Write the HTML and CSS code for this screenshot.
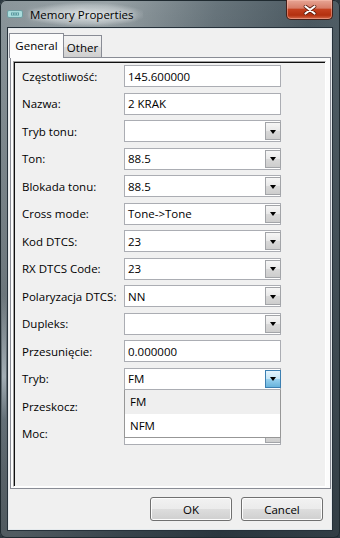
FILE: index.html
```html
<!DOCTYPE html>
<html lang="pl">
<head>
    <meta charset="UTF-8">
    <meta name="viewport" content="width=device-width, initial-scale=1.0">
    <title>Memory Properties</title>
    <link rel="stylesheet" href="styles.css">
</head>
<body>
    <div class="window">
        <!-- title bar -->
        <div class="titlebar">
            <svg class="app-icon" xmlns="http://www.w3.org/2000/svg" viewBox="0 0 16 8" width="16" height="8">
                <rect x="0.5" y="0.5" width="15" height="7" rx="1.5" fill="#a9dcdc" stroke="#6f9ea2"/>
                <rect x="4" y="2.5" width="8" height="3" fill="#5d9ca2"/>
                <rect x="5" y="3.5" width="1" height="1" fill="#d8f2f2"/>
                <rect x="7.5" y="3.5" width="1" height="1" fill="#d8f2f2"/>
                <rect x="10" y="3.5" width="1" height="1" fill="#d8f2f2"/>
            </svg>
            <span class="title">Memory Properties</span>
            <div class="close-btn">
                <svg xmlns="http://www.w3.org/2000/svg" viewBox="0 0 14 10" width="14" height="10">
                    <path d="M2.5 1.5L11.5 8.5M11.5 1.5L2.5 8.5" stroke="#5a1a0c" stroke-width="3.6" stroke-linecap="round"/>
                    <path d="M2.5 1.5L11.5 8.5M11.5 1.5L2.5 8.5" stroke="#ffffff" stroke-width="2.2" stroke-linecap="round"/>
                </svg>
            </div>
        </div>

        <!-- client area -->
        <div class="client">
            <div class="tabs">
                <div class="tab active">General</div>
                <div class="tab">Other</div>
            </div>

            <div class="tab-panel">
                <div class="form-frame">
                    <div class="form-grid">
                        <label>Częstotliwość:</label>
                        <div class="field"><span class="value">145.600000</span></div>

                        <label>Nazwa:</label>
                        <div class="field"><span class="value">2 KRAK</span></div>

                        <label>Tryb tonu:</label>
                        <div class="field combo"><span class="value"></span><span class="combo-btn"></span></div>

                        <label>Ton:</label>
                        <div class="field combo"><span class="value">88.5</span><span class="combo-btn"></span></div>

                        <label>Blokada tonu:</label>
                        <div class="field combo"><span class="value">88.5</span><span class="combo-btn"></span></div>

                        <label>Cross mode:</label>
                        <div class="field combo"><span class="value">Tone-&gt;Tone</span><span class="combo-btn"></span></div>

                        <label>Kod DTCS:</label>
                        <div class="field combo"><span class="value">23</span><span class="combo-btn"></span></div>

                        <label>RX DTCS Code:</label>
                        <div class="field combo"><span class="value">23</span><span class="combo-btn"></span></div>

                        <label>Polaryzacja DTCS:</label>
                        <div class="field combo"><span class="value">NN</span><span class="combo-btn"></span></div>

                        <label>Dupleks:</label>
                        <div class="field combo"><span class="value"></span><span class="combo-btn"></span></div>

                        <label>Przesunięcie:</label>
                        <div class="field"><span class="value">0.000000</span></div>

                        <label>Tryb:</label>
                        <div class="field combo open">
                            <span class="value">FM</span><span class="combo-btn"></span>
                            <!-- opened list -->
                            <div class="dropdown-list">
                                <div class="dropdown-item hover">FM</div>
                                <div class="dropdown-item">NFM</div>
                            </div>
                        </div>

                        <label>Przeskocz:</label>
                        <div class="field combo"><span class="value"></span><span class="combo-btn"></span></div>

                        <label>Moc:</label>
                        <div class="field combo"><span class="value"></span><span class="combo-btn"></span></div>
                    </div>
                </div>
            </div>

            <div class="actions">
                <button class="button">OK</button>
                <button class="button">Cancel</button>
            </div>
        </div>
    </div>
</body>
</html>
```

FILE: styles.css
```css
/* reset */
* {
    margin: 0;
    padding: 0;
    box-sizing: border-box;
}

body {
    background: #2c3840;
    font-family: "Open Sans", "Noto Sans", sans-serif;
    font-size: 11.5px;
    color: #000;
}

/* window frame */
.window {
    width: 340px;
    height: 538px;
    border-radius: 6px;
    overflow: hidden;
    display: flex;
    flex-direction: column;
    box-shadow: inset 0 0 0 1px #1f2a30;
    background:
        linear-gradient(to bottom, transparent 55%, rgba(214, 226, 234, 0.55) 70%, rgba(120, 140, 155, 0.2) 78%, transparent 88%) 2px 0 / 4px 100% no-repeat,
        linear-gradient(to bottom, rgba(0, 0, 0, 0) 0%, rgba(8, 18, 26, 0.5) 100%),
        linear-gradient(100deg, #8a959a 0%, #99a3a7 25%, #68757c 50%, #4c5a62 72%, #5d6a71 100%);
}

.titlebar {
    height: 28px;
    display: flex;
    align-items: center;
    padding-left: 7px;
}

.app-icon {
    margin-right: 7px;
}

.title {
    font-size: 11.5px;
    padding: 4px 10px 4px 2px;
    margin-left: -2px;
    background: radial-gradient(ellipse at center, rgba(235, 240, 242, 0.75) 0%, rgba(235, 240, 242, 0.3) 55%, transparent 75%);
    text-shadow: 0 0 6px rgba(255, 255, 255, 0.9);
}

.close-btn {
    margin-left: auto;
    margin-right: 7px;
    align-self: flex-start;
    width: 47px;
    height: 20px;
    border: 1px solid #44201a;
    border-top: none;
    border-radius: 0 0 5px 5px;
    background: linear-gradient(to bottom, #e7a595 0%, #d77d68 42%, #c4401f 50%, #b3300f 80%, #d5694a 100%);
    box-shadow: inset 0 0 0 1px rgba(255, 200, 185, 0.45);
    display: flex;
    align-items: center;
    justify-content: center;
}

/* client area */
.client {
    margin: 0 8px 8px;
    height: 502px;
    background: #f0f0f0;
    border: 1px solid #e4e9ec;
    box-shadow: 0 0 0 1px #26313a;
    padding-top: 4px;
}

/* tabs */
.tabs {
    height: 24px;
    display: flex;
    align-items: flex-end;
    position: relative;
    z-index: 1;
}

.tab {
    height: 22px;
    width: 38px;
    border: 1px solid #898c95;
    border-bottom: none;
    border-left: none;
    background: linear-gradient(to bottom, #f2f2f2 0%, #ebebeb 50%, #dddddd 51%, #cfcfcf 100%);
    display: flex;
    align-items: center;
    justify-content: center;
    padding-top: 1px;
}

.tab.active {
    height: 25px;
    width: 55px;
    margin-bottom: -1px;
    border-left: 1px solid #898c95;
    background: #fcfcfc;
    padding-top: 0;
    padding-bottom: 2px;
}

.tab-panel {
    margin-left: 1px;
    height: 432px;
    border: 1px solid #898c95;
    background: #fcfcfc;
    padding: 3px 4px 1px 2px;
}

/* sunken frame round the form */
.form-frame {
    height: 100%;
    background: #f0f0f0;
    border: 1px solid;
    border-color: #a0a0a0 #ffffff #ffffff #a0a0a0;
    box-shadow: inset 1px 1px 0 #101010;
    padding: 3px 0 0 8px;
}

.form-grid {
    display: grid;
    grid-template-columns: 102px 157px;
    grid-auto-rows: 22px;
    row-gap: 5.5px;
}

.form-grid label {
    display: flex;
    align-items: center;
    white-space: nowrap;
}

/* entries and combos */
.field {
    position: relative;
    display: flex;
    align-items: center;
    background: #fff;
    border: 1px solid #abadb3;
}

.field .value {
    flex: 1;
    padding-left: 3px;
    white-space: nowrap;
}

.combo-btn {
    width: 16px;
    height: 18px;
    margin-right: -1px;
    border: 1px solid #a2a4a8;
    background: linear-gradient(to bottom, #f6f6f6 0%, #e8e8e8 50%, #d9d9d9 51%, #cdcdcd 100%);
    display: flex;
    align-items: center;
    justify-content: center;
}

.combo-btn::after {
    content: "";
    border-left: 3.5px solid transparent;
    border-right: 3.5px solid transparent;
    border-top: 4px solid #000;
    margin-top: 1px;
}

.open .combo-btn {
    border-color: #3c7fb1;
    background: linear-gradient(to bottom, #e5f4fc 0%, #c4e5f6 50%, #98d1ef 51%, #68b3db 100%);
}

.dropdown-list {
    position: absolute;
    top: 21px;
    left: -1px;
    right: -1px;
    height: 48px;
    z-index: 2;
    background: #fff;
    border: 1px solid #979797;
    border-top: none;
}

.dropdown-item {
    height: 24px;
    padding-left: 5px;
    display: flex;
    align-items: center;
}

.dropdown-item.hover {
    background: #efefef;
}

/* dialog buttons */
.actions {
    display: flex;
    justify-content: flex-end;
    gap: 9px;
    margin-top: 8px;
    padding-right: 8px;
}

.button {
    width: 82px;
    height: 24px;
    font-family: "Open Sans", "Noto Sans", sans-serif;
    font-size: 11.5px;
    color: #000;
    border: 1px solid #707070;
    border-radius: 3px;
    background: linear-gradient(to bottom, #f2f2f2 0%, #ebebeb 50%, #dddddd 51%, #cfcfcf 100%);
    box-shadow: inset 0 0 0 1px #fcfcfc;
}
```
